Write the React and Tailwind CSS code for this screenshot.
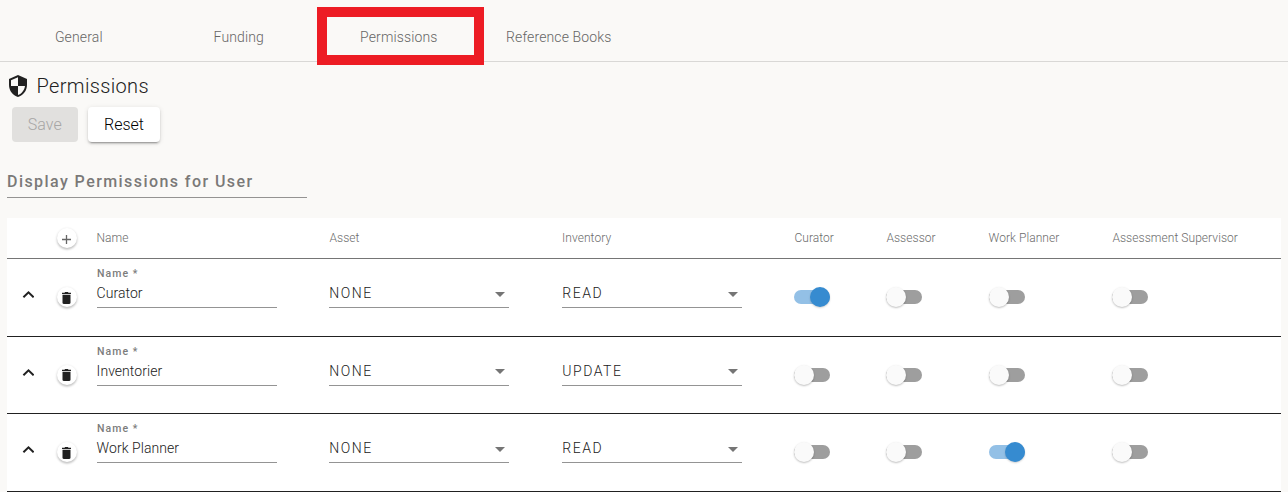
import React from "react";

const columns =
  "grid grid-cols-[50px_40px_232px_233px_232px_92px_103px_123px_1fr]";

const roles = ["Curator", "Assessor", "Work Planner", "Assessment Supervisor"];

const rows = [
  { name: "Curator", asset: "NONE", inventory: "READ", on: "Curator", height: "h-[78px]", icon: "mt-0.5", caret: "mt-2" },
  { name: "Inventorier", asset: "NONE", inventory: "UPDATE", on: null, height: "h-[77px]", icon: "mt-0", caret: "mt-[7px]" },
  { name: "Work Planner", asset: "NONE", inventory: "READ", on: "Work Planner", height: "h-[78px]", icon: "mt-0.5", caret: "mt-2" },
];

function Tab({ children, boxed }) {
  return (
    <button className="relative flex h-full w-40 shrink-0 items-center justify-center pt-3 text-sm font-light tracking-[0.13px] text-[#666665]">
      <span className="pl-[0.6px]">{children}</span>
      {boxed && (
        <span className="absolute left-[-1.5px] top-[7px] h-[58px] w-[167px] border-10 border-[#ed1c24]" />
      )}
    </button>
  );
}

function RoundButton({ label, children }) {
  return (
    <button
      aria-label={label}
      className="flex size-5 items-center justify-center rounded-full bg-white shadow-[0_1px_3px_rgba(0,0,0,0.2),0_2px_2px_rgba(0,0,0,0.1)]"
    >
      {children}
    </button>
  );
}

function Select({ value, caret }) {
  return (
    <div className="mt-[25px] flex h-6 w-[180px] justify-between border-b border-[#949494] text-sm leading-[18px] tracking-[1.5px] text-[#212121]">
      <span className="pl-[0.3px] font-light">{value}</span>
      <svg className={`${caret} mr-1 h-[5px] w-2.5`} viewBox="0 0 10 5" fill="#757575">
        <path d="M0 0h10L5 5z" />
      </svg>
    </div>
  );
}

function Toggle({ on }) {
  return (
    <div className="mt-7 flex h-5 w-9 items-center">
      <div
        className={
          on
            ? "flex h-3.5 w-9 items-center justify-end rounded-full bg-[#93c0e6]"
            : "flex h-3.5 w-9 items-center rounded-full bg-[#9e9e9e]"
        }
      >
        <span
          className={
            on
              ? "size-5 rounded-full bg-[#368bd0] shadow-[0_1px_2px_rgba(0,0,0,0.18)]"
              : "size-5 rounded-full bg-[#fafafa] shadow-[0_1px_2px_rgba(0,0,0,0.25)]"
          }
        />
      </div>
    </div>
  );
}

export default function App() {
  return (
    <div className="h-[492px] overflow-hidden bg-[#faf9f7] font-['Roboto',sans-serif] font-light">
      <nav className="flex h-[62px] border-b border-[#d9d8d6]">
        <div className="-ml-[1.5px] flex h-full">
          <Tab>General</Tab>
          <Tab>Funding</Tab>
          <Tab boxed>Permissions</Tab>
          <Tab>Reference Books</Tab>
        </div>
      </nav>

      <header className="flex h-[45px] items-center gap-[6.5px] pl-[6px] pt-0.5">
        <svg className="mt-px h-6 w-6" viewBox="0 0 24 24" fill="#212121">
          <path d="M12 1 3 5v6c0 5.55 3.84 10.74 9 12 5.16-1.26 9-6.45 9-12V5l-9-4zm0 10.99h7c-.53 4.12-3.28 7.79-7 8.94V12H5V6.3l7-3.11v8.8z" />
        </svg>
        <h1 className="text-xl tracking-[0.35px] text-[#212121]">Permissions</h1>
      </header>

      <div className="flex gap-2.5 pl-3">
        <button className="h-[35px] w-[66px] rounded bg-[#e1e0de] pr-[0.5px] text-base tracking-[0.1px] text-[#a7a6a5]">
          Save
        </button>
        <button className="h-[35px] w-[72px] rounded bg-white text-base text-black shadow-[0_3px_1px_-2px_rgba(0,0,0,0.2),0_2px_2px_rgba(0,0,0,0.14),0_1px_5px_rgba(0,0,0,0.12)]">
          Reset
        </button>
      </div>

      <div className="ml-[7px] mt-[30px] h-[26px] w-[300px] border-b border-[#949392] text-base font-medium leading-[20px] tracking-[1.43px] text-[#7a7978]">
        Display Permissions for User
      </div>

      <main className="mx-[7px] mt-5 bg-white">
        <div className={`${columns} h-[41px] items-center border-b border-[#757575] text-xs tracking-[0.06px] text-[#6c6c6c]`}>
          <span />
          <RoundButton label="Add">
            <svg className="mr-px mt-0.5 size-[9px]" viewBox="0 0 9 9" stroke="#666" strokeWidth="1.3">
              <path d="M4.5 0v9M0 4.5h9" />
            </svg>
          </RoundButton>
          <span className="-ml-[0.5px]">Name</span>
          <span className="pl-[0.5px]">Asset</span>
          <span>Inventory</span>
          {roles.map((role) => (
            <span
              key={role}
              className={
                role === "Work Planner"
                  ? "-ml-[0.5px] whitespace-nowrap"
                  : "whitespace-nowrap pl-[0.4px]"
              }
            >
              {role}
            </span>
          ))}
        </div>
        {rows.map((row) => (
          <div key={row.name} className={`${columns} ${row.height} border-b border-[#212121]`}>
            <svg
              className="ml-[15px] mt-8 h-[7px] w-3"
              viewBox="0 0 12 7"
              fill="none"
              stroke="#212121"
              strokeWidth="2"
            >
              <path d="M1.4 6.3 6.5 1.4l5.1 4.9" />
            </svg>
            <div className="mt-7">
              <RoundButton label="Delete">
                <svg className={`${row.icon} mr-[1.5px] h-3 w-[9px]`} viewBox="0 0 9 12" fill="#212121">
                  <path d="M.5 2.8h8v8c0 .7-.5 1.2-1.2 1.2H1.7C1 12 .5 11.5.5 10.8zM0 .7h2.5L3.1 0h2.8l.6.7H9V2H0z" />
                </svg>
              </RoundButton>
            </div>
            <div className="mt-2 h-[41px] w-[180px] border-b border-[#949494]">
              <div className="h-[17px] text-[10.5px] font-medium leading-[14px] tracking-[1.05px] text-[#7c7c7c]">
                Name *
              </div>
              <div className="-ml-[0.4px] text-sm leading-[18px] tracking-[0.05px] text-[#212121]">
                {row.name}
              </div>
            </div>
            <Select value={row.asset} caret={row.caret} />
            <Select value={row.inventory} caret={row.caret} />
            {roles.map((role) => (
              <Toggle key={role} on={row.on === role} />
            ))}
          </div>
        ))}
      </main>
    </div>
  );
}
